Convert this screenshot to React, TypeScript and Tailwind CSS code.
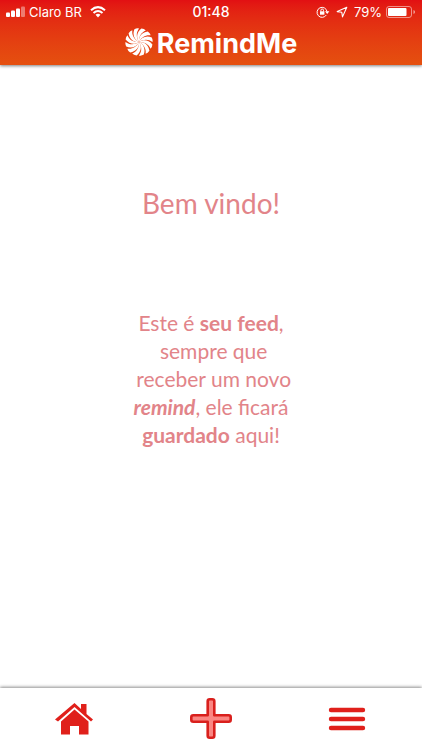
import React from "react";

const PETALS = [0, 30, 60, 90, 120, 150, 180, 210, 240, 270, 300, 330];

function CandyLogo() {
  return (
    <svg viewBox="-14 -14 28 28" className="size-7" aria-hidden="true">
      {PETALS.map((angle) => (
        <path
          key={angle}
          transform={`rotate(${angle})`}
          fill="#fff"
          d="M0 0C-3-4.200-2.400-9.600 2.400-13.400Q5.200-13.200 6.800-11.600C2-9.600-.2-5.500 0 0Z"
        />
      ))}
    </svg>
  );
}

function StatusBar() {
  return (
    <div className="grid h-6 grid-cols-3 items-center px-1.5 text-[13px] leading-6 text-white">
      <div className="flex items-center whitespace-nowrap">
        <svg viewBox="0 0 19 12" className="h-3 w-[19px]" fill="#fff" aria-hidden="true">
          <rect x="0" y="6.500" width="4" height="4.500" rx="1" />
          <rect x="5" y="4.500" width="4" height="6.500" rx="1" />
          <rect x="10" y="2.500" width="4" height="8.500" rx="1" />
          <rect x="15" y="0.500" width="4" height="10.500" rx="1" opacity=".4" />
        </svg>
        <span className="ml-1">Claro BR</span>
        <svg viewBox="0 0 16 12" className="ml-2 h-3 w-4" fill="none" stroke="#fff" strokeWidth="2" aria-hidden="true">
          <path d="M1 4.300Q8-2 15 4.300M3.500 7Q8 3 12.500 7" />
          <path d="M5.500 8.700Q8 6.600 10.500 8.700L8 11.400Z" fill="#fff" stroke="none" />
        </svg>
      </div>
      <span className="text-center text-[14px] font-medium">01:48</span>
      <div className="flex items-center justify-end">
        <svg viewBox="0 0 14 12" className="h-3 w-3.5" fill="none" stroke="#fff" aria-hidden="true">
          <path d="M10.300 9A5 5 0 1 1 11 5.600" />
          <path d="M9 5.300h4.400L11.200 8Z" fill="#fff" stroke="none" />
          <rect x="4" y="5.300" width="4.400" height="3.400" fill="#fff" stroke="none" />
          <path d="M4.900 5.500V4.300a1.300 1.300 0 0 1 2.600 0v1.200" />
        </svg>
        <svg viewBox="0 0 12 12" className="ml-1.5 size-3" fill="none" stroke="#fff" strokeWidth="1.1" strokeLinejoin="round" aria-hidden="true">
          <path d="M10.800 1.200 1.200 5.600l4.600.7.7 4.600Z" />
        </svg>
        <span className="ml-1.5">79%</span>
        <svg viewBox="0 0 30 12" className="ml-1 h-3 w-[30px]" aria-hidden="true">
          <rect x=".5" y=".5" width="25" height="11" rx="2.5" fill="none" stroke="#fff" strokeOpacity=".5" />
          <rect x="2" y="2" width="18.5" height="8" rx="1" fill="#fff" />
          <path d="M27.500 4v4q1.500-.6 1.500-2t-1.500-2Z" fill="#fff" opacity=".6" />
        </svg>
      </div>
    </div>
  );
}

export default function App() {
  return (
    <div className="flex min-h-screen flex-col bg-white font-['Inter','Liberation_Sans',sans-serif]">
      <header className="h-[65px] bg-linear-to-b from-[#e20f13] to-[#e5500f] shadow-[0_1px_3px_rgba(0,0,0,0.5)]">
        <StatusBar />
        <div className="flex items-center justify-center gap-1">
          <CandyLogo />
          <h1 className="pt-1 text-[27px] leading-8 font-bold text-white">RemindMe</h1>
        </div>
      </header>

      <main className="flex flex-1 flex-col items-center pt-[118px] text-center font-['Lato','Open_Sans',sans-serif] text-[#e28489]">
        <h2 className="text-[28px] leading-10">Bem vindo!</h2>
        <p className="mt-[86px] text-[21px] leading-7">
          Este é <b>seu feed</b>,<br />
          &nbsp;sempre que
          <br />
          &nbsp;receber um novo
          <br />
          <b>
            <i>remind</i>
          </b>
          , ele ficará
          <br />
          <b>guardado</b> aqui!
        </p>
      </main>

      <nav className="flex h-[62px] items-center justify-between pr-14 pl-[54px] shadow-[0_-1px_3px_rgba(0,0,0,0.45)]">
        <button type="button" aria-label="Início">
          <svg viewBox="0 0 40 34" className="h-[34px] w-10" fill="#e0201b" aria-hidden="true">
            <path d="M20.500 1 27 7V2h5.500v10l6.500 5.500-2 2L20.500 5 4 19.500 1 17.500Z" />
            <path d="M20.500 7.500 34.500 19.500V32.500H25V24H16v8.500H7V19.500Z" />
          </svg>
        </button>
        <button type="button" aria-label="Adicionar">
          <svg viewBox="0 0 44 44" className="size-11" fill="#fb8682" stroke="#d9201d" strokeWidth="2.600" strokeLinejoin="round" aria-hidden="true">
            <path d="M18.700 4.300q0-2 2-2h2.600q2 0 2 2v13.900h14.400q2 0 2 2v2.600q0 2-2 2H25.300v13.900q0 2-2 2h-2.600q-2 0-2-2V24.800H4.300q-2 0-2-2v-2.600q0-2 2-2h14.400Z" />
          </svg>
        </button>
        <button type="button" aria-label="Menu">
          <svg viewBox="0 0 38 26" className="h-[26px] w-[38px]" stroke="#e0201b" strokeWidth="4.400" strokeLinecap="round" aria-hidden="true">
            <path d="M3 4h32M3 13h32M3 22h32" />
          </svg>
        </button>
      </nav>
    </div>
  );
}
